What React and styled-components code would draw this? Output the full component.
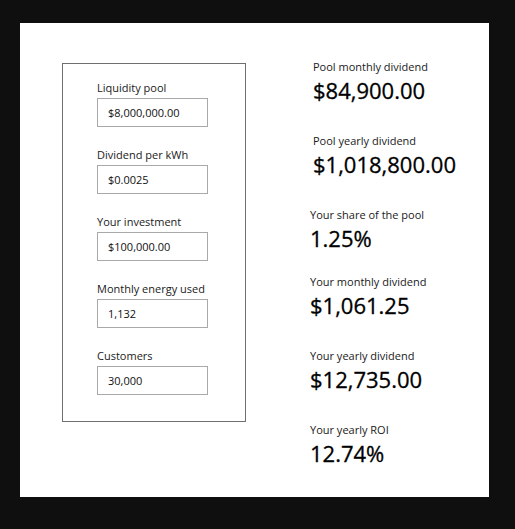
import React from "react";
import styled, { createGlobalStyle } from "styled-components";

const Global = createGlobalStyle`
  body {
    margin: 0;
    background: #0f0f0f;
    font-family: "Open Sans", "Noto Sans", sans-serif;
  }
`;

const Page = styled.div`
  padding: 23px 26px 32px 20px;
`;

const Panel = styled.div`
  display: flex;
  align-items: flex-start;
  width: 469px;
  height: 474px;
  box-sizing: border-box;
  padding: 40px 0 0 42px;
  background: #fff;
  color: #111;
`;

const InputBox = styled.div`
  display: flex;
  flex-direction: column;
  gap: 21px;
  width: 184px;
  height: 359px;
  box-sizing: border-box;
  padding: 17px 0 0 34px;
  border: 1px solid #6f6f6f;
`;

const Field = styled.div`
  display: flex;
  flex-direction: column;
  gap: 3px;
`;

const FieldLabel = styled.label`
  font-size: 11px;
  line-height: 14px;
  color: #1a1a1a;
`;

const Input = styled.input`
  width: 111px;
  height: 29px;
  box-sizing: border-box;
  padding: 0 10px;
  border: 1px solid #a9a9a9;
  font-family: inherit;
  font-size: 11px;
  color: #111;
  outline: none;
`;

const Results = styled.div`
  display: flex;
  flex-direction: column;
  margin-left: 64px;
  margin-top: -3px;
`;

const Result = styled.div`
  display: flex;
  flex-direction: column;
  gap: 1px;
  margin-top: ${(p) => p.top}px;
  padding-left: ${(p) => p.indent}px;
`;

const ResultLabel = styled.div`
  font-size: 11px;
  line-height: 14px;
  color: #1a1a1a;
`;

const ResultValue = styled.div`
  font-size: 22px;
  font-weight: 500;
  line-height: 30px;
  color: #000;
  -webkit-text-stroke: 0.3px #000;
`;

const fields = [
  ["Liquidity pool", "$8,000,000.00"],
  ["Dividend per kWh", "$0.0025"],
  ["Your investment", "$100,000.00"],
  ["Monthly energy used", "1,132"],
  ["Customers", "30,000"],
];

const results = [
  ["Pool monthly dividend", "$84,900.00", 0, 3],
  ["Pool yearly dividend", "$1,018,800.00", 29, 3],
  ["Your share of the pool", "1.25%", 29, 0],
  ["Your monthly dividend", "$1,061.25", 22, 0],
  ["Your yearly dividend", "$12,735.00", 29, 0],
  ["Your yearly ROI", "12.74%", 29, 0],
];

export default function App() {
  return (
    <Page>
      <Global />
      <Panel>
        <InputBox>
          {fields.map(([label, value]) => (
            <Field key={label}>
              <FieldLabel>{label}</FieldLabel>
              <Input defaultValue={value} />
            </Field>
          ))}
        </InputBox>
        <Results>
          {results.map(([label, value, top, indent]) => (
            <Result key={label} top={top} indent={indent}>
              <ResultLabel>{label}</ResultLabel>
              <ResultValue>{value}</ResultValue>
            </Result>
          ))}
        </Results>
      </Panel>
    </Page>
  );
}
